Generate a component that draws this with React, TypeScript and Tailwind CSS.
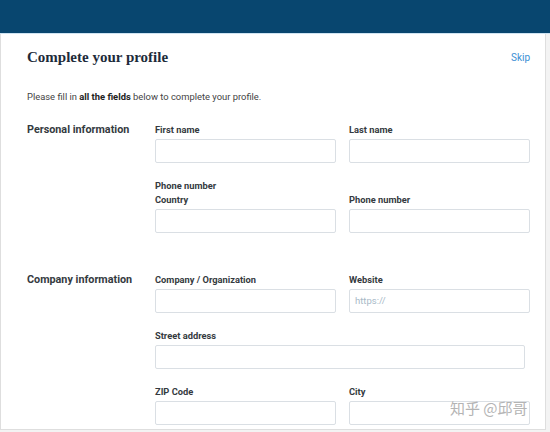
import React from "react";

const Label = ({ children }: { children: React.ReactNode }) => (
  <div className="text-[9.3px] leading-[14px] font-bold text-[#343a40]">{children}</div>
);

const Input = ({ placeholder, className = "w-[181px]" }: { placeholder?: string; className?: string }) => (
  <div
    className={`mt-[2px] h-[24px] rounded-[2px] border border-[#dadfe4] bg-white flex items-center px-[5px] text-[9.5px] text-[#a8b9c7] ${className}`}
  >
    {placeholder}
  </div>
);

export default function App() {
  return (
    <div
      className="relative w-[550px] h-[432px] bg-[#f3f3f3] overflow-hidden"
      style={{ fontFamily: "Roboto, 'Liberation Sans', sans-serif" }}
    >
      <div className="h-[33px] bg-[#08466f]" />
      <div className="h-[1px] bg-[#cfe4f2]" />
      <div className="w-[546px] h-[396px] bg-white border-l border-r border-b border-[#dedede] pl-[26px] pr-[15px]">
        <div className="flex items-center justify-between pt-[13px]">
          <div
            className="text-[15px] leading-[20px] font-bold text-[#1d2b3a]"
            style={{ fontFamily: "'Liberation Serif', serif" }}
          >
            Complete your profile
          </div>
          <div className="text-[10px] text-[#3b8fd4]">Skip</div>
        </div>
        <div className="mt-[23px] text-[9.4px] leading-[14px] text-[#444]">
          Please fill in <span className="font-bold text-[#222]">all the fields</span> below to complete your
          profile.
        </div>

        {/* Personal information */}
        <div className="flex mt-[19px]">
          <div className="w-[128px] text-[10.8px] leading-[14px] font-bold text-[#343a40]">Personal information</div>
          <div className="flex flex-col">
            <div className="flex gap-[13px] items-end">
              <div>
                <Label>First name</Label>
                <Input />
              </div>
              <div>
                <Label>Last name</Label>
                <Input />
              </div>
            </div>
            <div className="flex gap-[13px] items-end mt-[16px]">
              <div>
                <Label>Phone number</Label>
                <Label>Country</Label>
                <Input />
              </div>
              <div>
                <Label>Phone number</Label>
                <Input />
              </div>
            </div>
          </div>
        </div>

        {/* Company information */}
        <div className="flex mt-[40px]">
          <div className="w-[128px] text-[10.8px] leading-[14px] font-bold text-[#343a40]">Company information</div>
          <div className="flex flex-col">
            <div className="flex gap-[13px] items-end">
              <div>
                <Label>Company / Organization</Label>
                <Input />
              </div>
              <div>
                <Label>Website</Label>
                <Input placeholder="https://" />
              </div>
            </div>
            <div className="mt-[16px]">
              <Label>Street address</Label>
              <Input className="w-[370px]" />
            </div>
            <div className="flex gap-[13px] items-end mt-[16px]">
              <div>
                <Label>ZIP Code</Label>
                <Input />
              </div>
              <div>
                <Label>City</Label>
                <Input />
              </div>
            </div>
          </div>
        </div>
      </div>
      <div
        className="absolute left-[450px] top-[398px] text-[15px] leading-[20px] text-[#b4b4b4]"
        style={{ fontFamily: "'Noto Sans CJK SC', sans-serif" }}
      >
        知乎 @邱哥
      </div>
    </div>
  );
}
